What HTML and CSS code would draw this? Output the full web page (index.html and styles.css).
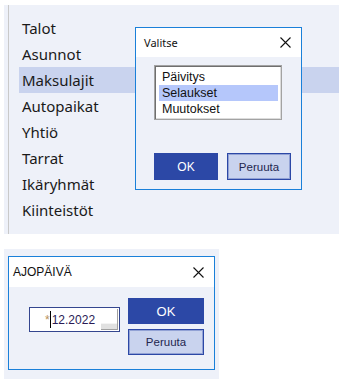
FILE: index.html
```html
<!DOCTYPE html>
<html lang="fi">
<head>
<meta charset="utf-8">
<title>Valitse</title>
<link rel="stylesheet" href="styles.css">
</head>
<body>
<div class="page">
  <section class="panel panel-main">
    <div class="rail">
      <ul class="nav">
        <li class="nav-item">Talot</li>
        <li class="nav-item">Asunnot</li>
        <li class="nav-item active">Maksulajit</li>
        <li class="nav-item">Autopaikat</li>
        <li class="nav-item">Yhtiö</li>
        <li class="nav-item">Tarrat</li>
        <li class="nav-item">Ikäryhmät</li>
        <li class="nav-item">Kiinteistöt</li>
      </ul>
    </div>
    <div class="dialog dlg-select">
      <div class="titlebar">
        <span class="title title-seg">Valitse</span>
        <svg class="close" width="11" height="11" viewBox="0 0 11 11"><path d="M0.5 0.5L10.5 10.5M10.5 0.5L0.5 10.5" stroke="#111" stroke-width="1.1" fill="none"/></svg>
      </div>
      <div class="body body-select">
        <ul class="listbox">
          <li class="opt">Päivitys</li>
          <li class="opt sel">Selaukset</li>
          <li class="opt">Muutokset</li>
        </ul>
        <div class="btnrow">
          <button class="btn btn-primary">OK</button>
          <button class="btn btn-secondary">Peruuta</button>
        </div>
      </div>
    </div>
  </section>

  <section class="panel panel-date">
    <div class="dialog dlg-date">
      <div class="titlebar">
        <span class="title">AJOPÄIVÄ</span>
        <svg class="close" width="11" height="11" viewBox="0 0 11 11"><path d="M0.5 0.5L10.5 10.5M10.5 0.5L0.5 10.5" stroke="#111" stroke-width="1.1" fill="none"/></svg>
      </div>
      <div class="body body-date">
        <div class="datefield">
          <span class="star">*</span><span class="caret"></span><span class="dateval">12.2022</span>
          <span class="spin"></span>
        </div>
        <div class="btncol">
          <button class="btn btn-primary btn-wide">OK</button>
          <button class="btn btn-secondary btn-wide">Peruuta</button>
        </div>
      </div>
    </div>
  </section>
</div>
</body>
</html>
```

FILE: styles.css
```css
* { box-sizing: border-box; }
html, body { margin: 0; padding: 0; background: #ffffff; }
body { font-family: "Noto Sans", "Liberation Sans", sans-serif; color: #1b1b1b; }

.page {
  display: flex;
  flex-direction: column;
  gap: 15px;
  padding: 5px 0 0 4px;
}

.panel { background: #eef1f9; }

.panel-main {
  position: relative;
  width: 335px;
  height: 229px;
  padding-left: 4px;
}

.rail {
  height: 100%;
  border-left: 1px solid #c9c9c9;
  padding-top: 10px;
}

.nav {
  list-style: none;
  margin: 0 0 0 10px;
  padding: 0;
}

.nav-item {
  height: 26px;
  line-height: 26px;
  padding-left: 3px;
  font-size: 15px;
  color: #1a1a1a;
}

.nav-item.active { background: #c9d3ee; }

.dialog {
  background: #eef1f9;
  border: 1px solid #1a80d9;
  display: flex;
  flex-direction: column;
}

.dlg-select {
  position: absolute;
  left: 131px;
  top: 22px;
  width: 167px;
  height: 163px;
}

.titlebar {
  height: 29px;
  background: #ffffff;
  display: flex;
  align-items: center;
  justify-content: space-between;
  padding: 0 10px 0 8px;
}

.title {
  font-family: "Liberation Sans", Arial, sans-serif;
  font-size: 12px;
  color: #111;
}

.title-seg {
  font-family: "Noto Sans", sans-serif;
  font-size: 11px;
}

.close { display: block; }

.body-select {
  padding: 8px 0 0 18px;
}

.listbox {
  list-style: none;
  margin: 0;
  width: 128px;
  height: 55px;
  padding: 3px 3px 0 4px;
  background: #ffffff;
  border: 1px solid #a3a3a3;
  box-shadow: inset 1px 1px 0 #6f6f6f, inset -1px -1px 0 #dcdcdc;
}

.opt {
  height: 16px;
  line-height: 16px;
  padding-left: 3px;
  font-family: "Liberation Sans", Arial, sans-serif;
  font-size: 12.5px;
  color: #111;
}

.opt.sel { background: #b5c7fb; }

.btnrow {
  display: flex;
  gap: 9px;
  margin-top: 33px;
}

.btn {
  font-family: "Liberation Sans", Arial, sans-serif;
  font-size: 11.5px;
  width: 64px;
  height: 27px;
  padding: 0;
  margin: 0;
  border: 1px solid #2c48a6;
  cursor: default;
}

.btn-primary { background: #2c48a6; color: #ffffff; font-size: 12px; }
.btn-secondary {
  background: #c9d3ee;
  color: #23264f;
  box-shadow: inset 0 0 0 1px rgba(44, 72, 166, 0.35);
}

.panel-date {
  width: 215px;
  height: 130px;
  padding: 7px 4px 0 4px;
}

.dlg-date {
  width: 207px;
  height: 114px;
}

.dlg-date .titlebar { height: 30px; padding-left: 4px; }

.body-date {
  display: flex;
  align-items: flex-start;
  padding: 11px 0 0 20px;
  gap: 8px;
}

.datefield {
  position: relative;
  margin-top: 9px;
  width: 91px;
  height: 25px;
  border: 1px solid #34468f;
  background: #ffffff;
  display: flex;
  align-items: center;
  padding-left: 15px;
  font-family: "Liberation Sans", Arial, sans-serif;
  font-size: 12px;
}

.star { color: #b7915a; }
.caret {
  display: inline-block;
  width: 1px;
  height: 17px;
  background: #000;
  margin: 0 1px 0 0;
}
.dateval { color: #2a1b55; }

.spin {
  position: absolute;
  right: 1px;
  top: 1px;
  width: 17px;
  height: 21px;
  border-right: 1px solid #a0a0a0;
  border-bottom: 1px solid #a0a0a0;
}
.spin::after {
  content: "";
  position: absolute;
  left: 0;
  bottom: 0;
  width: 16px;
  height: 5px;
  background: #e1e1e1;
  border-top: 1px solid #f4f4f4;
}

.btncol {
  display: flex;
  flex-direction: column;
  gap: 5px;
}

.btn-wide { width: 76px; height: 26px; }
.btncol .btn-primary { font-size: 13px; }
```
